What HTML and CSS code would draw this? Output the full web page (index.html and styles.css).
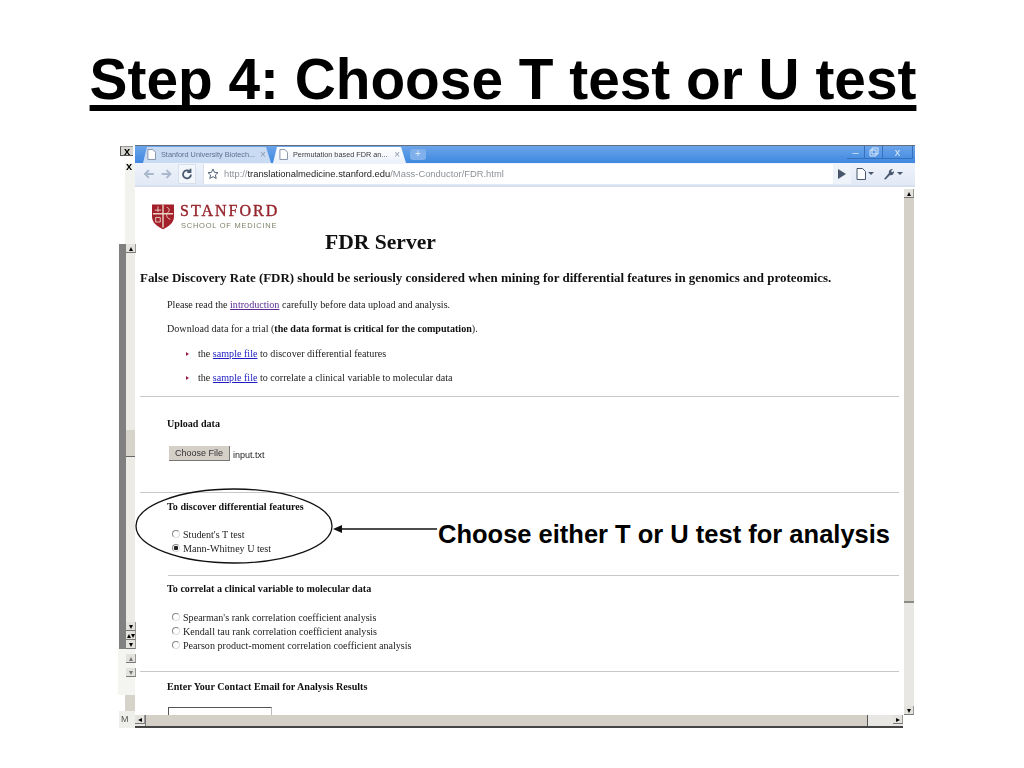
FILE: index.html
```html
<!DOCTYPE html>
<html lang="en">
<head>
    <meta charset="UTF-8">
    <title>Step 4: Choose T test or U test</title>
    <link rel="stylesheet" href="styles.css">
</head>
<body>
    <h1>Step 4: Choose T test or U test</h1>

    <div class="shot">
        <div class="strip">
            <div class="strip-top"><span class="strip-box">x</span></div>
            <div class="strip-x">x</div>
            <div class="strip-body">
                <div class="sb-btn">&#9652;</div>
                <div class="strip-track"><div class="strip-thumb"></div></div>
                <div class="sb-btn">&#9662;</div>
                <div class="sb-btn">&#9652;&#9662;</div>
                <div class="sb-btn">&#9662;</div>
            </div>
            <div class="strip-low">
                <div class="sb-btn pale">&#9652;</div>
                <div class="sb-btn pale">&#9662;</div>
            </div>
            <div class="strip-tan"></div>
            <div class="strip-m">M</div>
        </div>

        <div class="window">
            <div class="tabbar">
                <div class="tab">
                    <svg class="doc" viewBox="0 0 10 12"><path d="M1 .5h5.500l3 3v8h-8.500z" fill="#fff" stroke="#7a8aa0"/></svg>
                    <span class="tab-name">Stanford University Biotech...</span><span class="tab-x">×</span>
                </div>
                <div class="tab active">
                    <svg class="doc" viewBox="0 0 10 12"><path d="M1 .5h5.500l3 3v8h-8.500z" fill="#fff" stroke="#7a8aa0"/></svg>
                    <span class="tab-name">Permutation based FDR an...</span><span class="tab-x">×</span>
                </div>
                <div class="newtab">+</div>
                <div class="winctl">
                    <span class="ctl">–</span><span class="ctl">
                        <svg viewBox="0 0 10 10" width="10" height="10"><path d="M3 1h6v6h-6zM1 3h6v6h-6z" fill="none" stroke="#dfeaf8"/></svg>
                    </span><span class="ctl wide">x</span>
                </div>
            </div>

            <div class="toolbar">
                <svg class="nav" viewBox="0 0 30 12" width="30" height="12"><path d="M6 2l-4 4 4 4M2 6h9M24 2l4 4-4 4M28 6h-9" fill="none" stroke="#a9b8cc" stroke-width="2"/></svg>
                <div class="tool-box">
                    <svg viewBox="0 0 12 12" width="12" height="12"><path d="M10 6.500a4 4 0 1 1-1.200-3M9.500 .8v3.200h-3.200" fill="none" stroke="#4a5a70" stroke-width="1.800"/></svg>
                </div>
                <div class="omnibox">
                    <svg viewBox="0 0 12 12" width="12" height="12"><path d="M6 1l1.500 3.300 3.500.4-2.600 2.300.8 3.500-3.200-1.900-3.200 1.900.8-3.500-2.600-2.300 3.500-.4z" fill="none" stroke="#54657c"/></svg>
                    <span class="url"><span class="dim">http://</span>translationalmedicine.stanford.edu<span class="dim">/Mass-Conductor/FDR.html</span></span>
                </div>
                <div class="play">
                    <svg viewBox="0 0 8 10" width="8" height="10"><path d="M0 0l8 5-8 5z" fill="#47566b"/></svg>
                </div>
                <div class="tool-menu">
                    <svg viewBox="0 0 10 12" width="10" height="12"><path d="M1 .5h5.500l3 3v8h-8.500z" fill="#fff" stroke="#47566b"/></svg>
                    <span class="caret"></span>
                </div>
                <div class="tool-menu">
                    <svg viewBox="0 0 12 12" width="12" height="12"><path d="M1 11l5-6c-.6-2 1-4 4-4l-2 2 1 1.500 2-1.500c.3 3-2 4.800-4 4l-4.500 4.500z" fill="#47566b"/></svg>
                    <span class="caret"></span>
                </div>
            </div>

            <div class="viewport">
                <div class="page">
                    <div class="logo">
                        <svg class="shield" viewBox="0 0 24 28" width="24" height="28">
                            <path d="M0 1h24v13c0 7-6 11-12 14-6-3-12-7-12-14z" fill="#a3202a"/>
                            <path d="M12 1v25M1 11h22" stroke="#e8d4c8" stroke-width="1.500"/>
                            <path d="M3 7h7M6.500 3v6M4 15h5v5h-5zM16 4c4 1 3 4 1 6s-1 6 3 7" stroke="#e8d4c8" fill="none"/>
                        </svg>
                        <div>
                            <div class="logo-name">STANFORD</div>
                            <div class="logo-sub">SCHOOL OF MEDICINE</div>
                        </div>
                    </div>
                    <h2 class="server">FDR Server</h2>
                    <p class="lead">False Discovery Rate (FDR) should be seriously considered when mining for differential features in genomics and proteomics.</p>

                    <p class="row r-read">Please read the <a class="seen" href="#">introduction</a> carefully before data upload and analysis.</p>
                    <p class="row r-next">Download data for a trial (<b>the data format is critical for the computation</b>).</p>
                    <ul class="files">
                        <li>the <a href="#">sample file</a> to discover differential features</li>
                        <li>the <a href="#">sample file</a> to correlate a clinical variable to molecular data</li>
                    </ul>
                    <hr class="rule r-hr1">

                    <p class="row head r-upload">Upload data</p>
                    <div class="upload">
                        <button class="choose">Choose File</button>
                        <span class="filename">input.txt</span>
                    </div>
                    <hr class="rule r-hr2">

                    <p class="row head r-disc">To discover differential features</p>
                    <label class="opt first"><input type="radio" name="t">Student's T test</label>
                    <label class="opt"><input type="radio" name="t" checked>Mann-Whitney U test</label>
                    <hr class="rule short r-hr3">

                    <p class="row head r-corr">To correlat a clinical variable to molecular data</p>
                    <label class="opt first wide-gap"><input type="radio" name="c">Spearman's rank correlation coefficient analysis</label>
                    <label class="opt"><input type="radio" name="c">Kendall tau rank correlation coefficient analysis</label>
                    <label class="opt"><input type="radio" name="c">Pearson product-moment correlation coefficient analysis</label>
                    <hr class="rule r-hr4">

                    <p class="row head r-mail">Enter Your Contact Email for Analysis Results</p>
                    <input class="email" type="text">
                </div>
                <div class="vscroll">
                    <div class="sb-btn">&#9652;</div>
                    <div class="vthumb"></div>
                    <div class="vtrack"></div>
                    <div class="sb-btn">&#9662;</div>
                </div>
            </div>

            <div class="hscroll">
                <div class="sb-btn">&#9666;</div>
                <div class="hthumb"></div>
                <div class="htrack"></div>
                <div class="sb-btn">&#9656;</div>
            </div>
        </div>
    </div>

    <svg class="callout" viewBox="0 0 310 80" width="310" height="80">
        <ellipse cx="99" cy="38" rx="98" ry="37" fill="none" stroke="#111" stroke-width="1.300"/>
        <path d="M200 41h102" stroke="#111" stroke-width="1.500"/>
        <path d="M198 41l9-4v8z" fill="#111"/>
    </svg>
    <div class="callout-text">Choose either T or U test for analysis</div>
</body>
</html>
```

FILE: styles.css
```css
html, body {
    margin: 0;
    height: 768px;
    overflow: hidden;
    background: #fff;
}
body {
    position: relative;
    font-family: "Liberation Sans", Arial, sans-serif;
}
h1 {
    margin: 0;
    padding: 48px 18px 0 0;
    height: 100px;
    box-sizing: border-box;
    text-align: center;
    font-size: 56.800px;
    line-height: 64px;
    color: #000;
    text-decoration: underline;
    text-decoration-thickness: 6px;
    text-underline-offset: 6px;
    text-decoration-skip-ink: none;
    white-space: nowrap;
}

.shot {
    display: flex;
    margin: 45px 0 0 118px;
    width: 797px;
    height: 583px;
    filter: blur(.3px);
}

/* left strip, what remains of the window behind */
.strip {
    width: 17px;
    display: flex;
    flex-direction: column;
    font-size: 9px;
}
.strip-top {
    height: 18px;
    padding: 1px 0 0 2px;
    box-sizing: border-box;
}
.strip-box {
    display: block;
    width: 13px;
    height: 10px;
    line-height: 8px;
    text-align: center;
    font-weight: bold;
    font-size: 11px;
    background: #d8d6d0;
    border-left: 1px solid #555;
    border-bottom: 1px solid #555;
    border-top: 1px solid #999;
    box-sizing: border-box;
}
.strip-x {
    height: 81px;
    padding-left: 8px;
    line-height: 6px;
    font-weight: bold;
    font-size: 11px;
    background: linear-gradient(to right, #fff 7px, #f2f2ee 7px);
}
.strip-body {
    height: 405px;
    display: flex;
    flex-direction: column;
    border-left: 7px solid #808080;
    margin-left: 1px;
}
.strip-track {
    flex: 1;
    background: #ecebe6;
    display: flex;
    flex-direction: column;
    padding-top: 177px;
}
.strip-thumb {
    height: 26px;
    background: #d6d3cb;
    border-bottom: 1px solid #666;
}
.strip-low {
    height: 46px;
    padding: 5px 0 0 8px;
    box-sizing: border-box;
    display: flex;
    flex-direction: column;
    gap: 5px;
    background: #f4f4f0;
}
.strip-tan {
    height: 16px;
    margin-left: 7px;
    background: #d6d3cb;
}
.strip-m {
    height: 17px;
    margin-left: 1px;
    padding-left: 2px;
    line-height: 17px;
    color: #555;
    background: #eeeeea;
}

.sb-btn {
    width: 10px;
    height: 9px;
    line-height: 9px;
    flex: none;
    font-size: 8px;
    text-align: center;
    color: #000;
    overflow: hidden;
    background: #e4e2dc;
    border-bottom: 1px solid #777;
    border-right: 1px solid #999;
    box-sizing: border-box;
}
.sb-btn.pale {
    color: #777;
}

.window {
    width: 780px;
    display: flex;
    flex-direction: column;
}

.tabbar {
    height: 18px;
    display: flex;
    align-items: flex-end;
    padding-left: 8px;
    box-sizing: border-box;
    background: linear-gradient(#6ba4ea, #3f88e0);
    border-top: 1px solid #666f7d;
    font-size: 7.300px;
}
.tab {
    width: 128px;
    height: 16px;
    margin-right: 2px;
    padding: 0 6px 0 4px;
    display: flex;
    align-items: center;
    gap: 5px;
    box-sizing: border-box;
    color: #5d7190;
    background: #c9dbf3;
    clip-path: polygon(0 100%, 4px 0, calc(100% - 5px) 0, 100% 100%);
}
.tab.active {
    width: 133px;
    padding-left: 6px;
    color: #3b3b3b;
    background: linear-gradient(#fff, #eaf0fa);
}
.doc {
    width: 9px;
    height: 11px;
    flex: none;
}
.tab-name {
    flex: 1;
    white-space: nowrap;
}
.tab-x {
    color: #8c99aa;
    font-size: 10px;
}
.newtab {
    width: 16px;
    height: 11px;
    margin: 0 0 3px 2px;
    line-height: 10px;
    text-align: center;
    color: #dfeaf8;
    font-size: 10px;
    background: #7fb0ec;
    border-radius: 3px;
}
.winctl {
    margin-left: auto;
    align-self: flex-start;
    display: flex;
    margin-right: 2px;
    color: #dfeaf8;
}
.ctl {
    width: 17px;
    height: 12px;
    line-height: 12px;
    display: flex;
    align-items: center;
    justify-content: center;
    border: 1px solid #3670bc;
    border-top: 0;
    border-left: 0;
    font-size: 11px;
}
.ctl.wide {
    width: 29px;
}

.toolbar {
    height: 24px;
    display: flex;
    align-items: center;
    padding: 0 6px 0 8px;
    box-sizing: border-box;
    background: linear-gradient(#eef2fa, #e2eaf6);
    border-bottom: 2px solid #d6dfee;
}
.nav {
    margin-right: 6px;
}
.tool-box {
    width: 18px;
    height: 20px;
    display: flex;
    align-items: center;
    justify-content: center;
    background: #f3f6fb;
    border: 1px solid #d9e0ec;
    box-sizing: border-box;
    margin-right: 7px;
}
.omnibox {
    width: 643px;
    height: 20px;
    padding-left: 3px;
    display: flex;
    align-items: center;
    gap: 5px;
    box-sizing: border-box;
    background: #fff;
    border-left: 1px solid #d9e0ec;
}
.url {
    font-size: 9.400px;
    color: #222;
    white-space: nowrap;
}
.url .dim {
    color: #8d9198;
}
.play {
    width: 19px;
    height: 20px;
    display: flex;
    align-items: center;
    justify-content: center;
    background: #eef2f9;
    margin-right: 5px;
}
.tool-menu {
    width: 27px;
    display: flex;
    align-items: center;
    gap: 2px;
}
.caret {
    border: 3px solid transparent;
    border-top: 3px solid #47566b;
    border-bottom: 0;
}

.viewport {
    height: 530px;
    display: flex;
    overflow: hidden;
}
.page {
    flex: 1;
    min-width: 0;
    padding: 0 4px 0 5px;
    font-family: "Liberation Serif", "Times New Roman", serif;
    font-size: 10.100px;
    line-height: 14px;
    color: #222;
}
.logo {
    display: flex;
    gap: 6px;
    margin: 16px 0 0 12px;
    height: 27px;
}
.shield {
    width: 22px;
    height: 27px;
}
.logo-name {
    font-size: 16px;
    line-height: 16px;
    letter-spacing: 2px;
    color: #96242c;
    -webkit-text-stroke: .4px #96242c;
}
.logo-sub {
    padding-left: 1px;
    font-family: "Liberation Sans", sans-serif;
    font-size: 7.500px;
    line-height: 13px;
    letter-spacing: .75px;
    color: #7f8268;
    white-space: nowrap;
}
.server {
    margin: 0;
    padding-left: 185px;
    height: 24px;
    font-size: 21.600px;
    line-height: 24px;
    color: #111;
}
.lead {
    margin: 16px 0 0 0;
    font-weight: bold;
    font-size: 12.950px;
    line-height: 16px;
    color: #111;
    white-space: nowrap;
}
.row {
    margin: 0 0 0 27px;
    white-space: nowrap;
}
.row b,
.head {
    font-weight: bold;
    color: #111;
}
.r-read { margin-top: 12px; }
.r-next { margin-top: 10px; }
.r-upload { margin-top: 20px; }
.r-disc { margin-top: 7px; }
.r-corr { margin-top: 6px; }
.r-mail { margin-top: 8px; }
a {
    color: #1c1cc0;
}
a.seen {
    color: #5a2a90;
}
.files {
    margin: 11px 0 0 0;
    padding: 0 0 0 58px;
    list-style: none;
}
.files li {
    position: relative;
    margin-bottom: 10.500px;
    white-space: nowrap;
}
.files li::before {
    content: "";
    position: absolute;
    left: -12px;
    top: 5px;
    border-left: 3px solid #9a2040;
    border-top: 2px solid transparent;
    border-bottom: 2px solid transparent;
}
.rule {
    margin: 0;
    height: 0;
    border: 0;
    border-top: 1.500px solid #c8c8c8;
}
.r-hr1 { margin-top: 0; }
.r-hr2 { margin-top: 30px; }
.r-hr3 { margin-top: 19px; }
.r-hr4 { margin-top: 18px; }
.rule.short {
    margin-left: 28px;
}
.upload {
    display: flex;
    align-items: center;
    gap: 3px;
    margin: 15px 0 0 29px;
    height: 16px;
}
.choose {
    width: 61px;
    height: 15px;
    padding: 0;
    font-family: "Liberation Sans", sans-serif;
    font-size: 9px;
    color: #333;
    background: #d4d0c8;
    border: 0;
    border-right: 1px solid #777;
    border-bottom: 1px solid #777;
}
.filename {
    font-family: "Liberation Sans", sans-serif;
    font-size: 9px;
    padding-top: 2px;
}
.opt {
    display: flex;
    align-items: center;
    height: 14px;
    margin-left: 32px;
    white-space: nowrap;
}
.opt.first {
    margin-top: 14px;
}
.opt.wide-gap {
    margin-top: 15px;
}
.opt input {
    appearance: none;
    width: 8px;
    height: 8px;
    margin: 0 3px 2px 0;
    flex: none;
    border: 1px solid #8a8a8a;
    border-right-color: #ddd;
    border-bottom-color: #ddd;
    border-radius: 50%;
    background: #fff;
}
.opt input:checked {
    background: radial-gradient(circle, #222 0 2px, #fff 2.500px);
}
.email {
    display: block;
    width: 104px;
    height: 22px;
    margin: 13px 0 0 28px;
    padding: 0;
    box-sizing: border-box;
    border: 1px solid #bbb;
    border-top-color: #555;
    border-left-color: #555;
    background: #fff;
}

.vscroll {
    width: 10px;
    display: flex;
    flex-direction: column;
    flex: none;
    margin-left: 1px;
    margin-right: 1px;
    margin-top: 2px;
}
.vthumb {
    height: 405px;
    background: #d4d0c8;
    border-bottom: 2px solid #8c8a84;
    box-sizing: border-box;
}
.vtrack {
    flex: 1;
    background: #e8e7e3;
}

.hscroll {
    height: 11px;
    display: flex;
    background: #e8e7e3;
    border-bottom: 2px solid #444;
    width: 768px;
}
.hthumb {
    width: 723px;
    background: #d4d0c8;
    border-left: 1px solid #777;
    border-right: 1px solid #555;
    box-sizing: border-box;
}
.htrack {
    flex: 1;
}

/* annotation drawn on top of the screenshot */
.callout {
    position: absolute;
    left: 135px;
    top: 488px;
}
.callout-text {
    position: absolute;
    left: 438px;
    top: 520px;
    font-size: 25.500px;
    line-height: 28px;
    font-weight: bold;
    color: #000;
    white-space: nowrap;
}
```
